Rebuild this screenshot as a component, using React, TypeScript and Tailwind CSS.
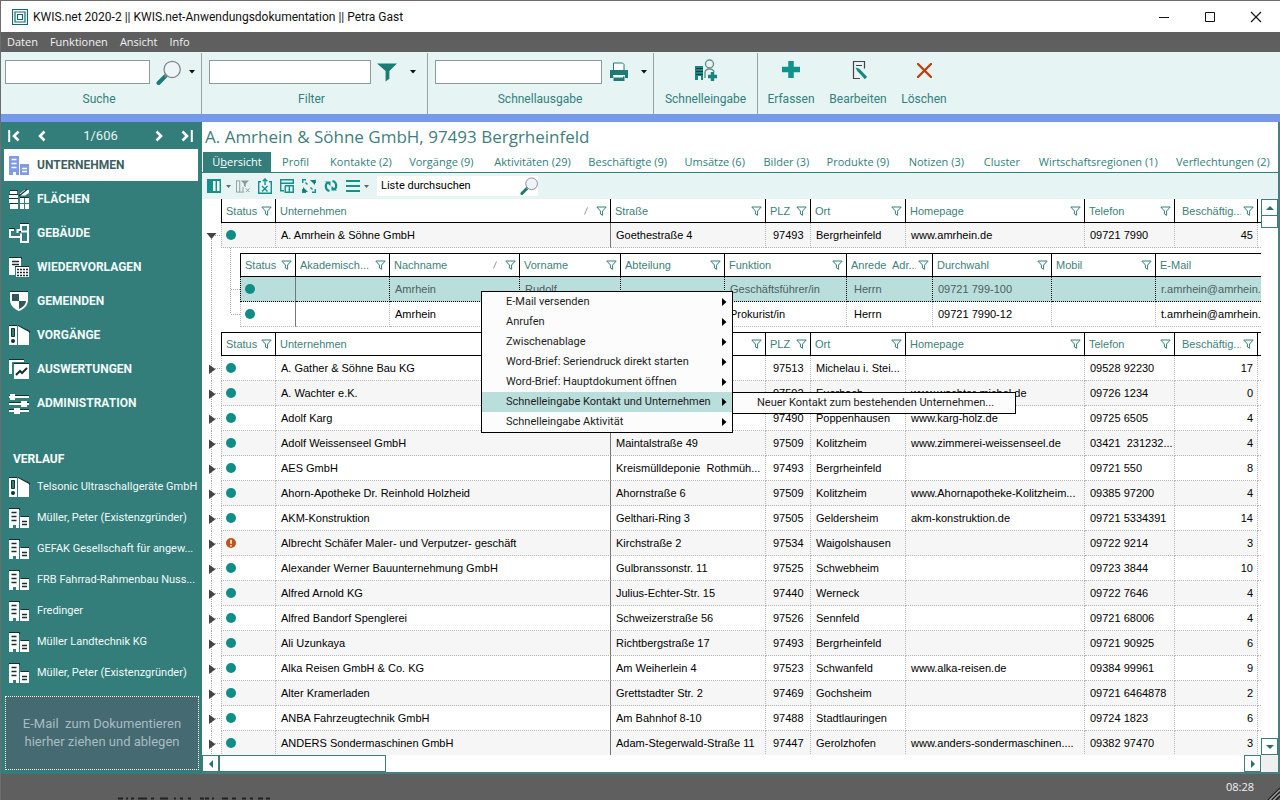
import React from "react";

type Cell = string;

const TEAL = "#1a8580";

/* ---------- drawings ---------- */

function Magnifier({ size }: { size: number }) {
  return (
    <svg width={size} height={size} viewBox="0 0 24 24" aria-hidden="true">
      <path d="M9 15.5 2.5 22" stroke="#1d7b76" strokeWidth="4" strokeLinecap="round" />
      <path d="m10.5 14-2 2" stroke="#888" strokeWidth="2" />
      <circle cx="15.5" cy="9" r="7.8" fill="#eef4f8" stroke="#7d868a" strokeWidth="1.2" />
    </svg>
  );
}

function Funnel() {
  return (
    <svg className="shrink-0" width="11" height="10" viewBox="0 0 11 10" aria-hidden="true">
      <path d="M.8 1h9.4L6.6 5v4.3L4.4 8V5L.8 1Z" fill="#fff" stroke="#33807d" />
    </svg>
  );
}

function Caret() {
  return (
    <svg width="6" height="4" viewBox="0 0 6 4" aria-hidden="true">
      <path d="M0 0h6L3 3.4Z" fill="#111" />
    </svg>
  );
}

function Building({ fill, line }: { fill: string; line: string }) {
  return (
    <svg width="21" height="21" viewBox="0 0 21 21" aria-hidden="true">
      <path d="M0 0h11v2H0zM12 8h8v2h-8z" fill={line} />
      <path d="M0 1h10v19H7v-3H4v3H0zM11 9h9v11h-9z" fill={fill} />
      <path d="M2.5 4.500h5M2.500 8.500h5M2.500 12.500h5M13 13.500h5M13 16.500h5" stroke={line} strokeWidth="1.400" />
    </svg>
  );
}

function Binder() {
  return (
    <svg width="21" height="21" viewBox="0 0 21 21" aria-hidden="true">
      <path d="M0 0h8v2H0zM9 0l12 6v2L9 2z" fill="#16302f" />
      <path d="M0 1h8v19H0zM9 1l11 6v13H9z" fill="#fff" />
      <path d="M2.5 3.5h3v8h-3z" fill="#337d7a" stroke="#16302f" />
      <circle cx="4" cy="16" r="2" fill="#16302f" />
    </svg>
  );
}

function Parcels() {
  return (
    <svg width="21" height="21" viewBox="0 0 21 21" aria-hidden="true">
      <path d="M1 1h8v1H1zM0 5h9v1H0zM0 9h9v1H0zM1 14h8v1H1zM11 8h9v1h-9z" fill="#16302f" />
      <path d="M1 2h7v3H1zM0 6h9v3H0zM0 10h9v4H0zM1 15h8v5H1zM11 9h4v5h-4zM16 9h4v5h-4zM11 15h4v5h-4zM16 15h4v5h-4z" fill="#fff" />
      <path d="M11 6.500V4.500L15.500 1H20v3l-4 2.500z" fill="#fff" />
      <path d="M10 7 18 .500" stroke="#16302f" strokeWidth="1.200" />
    </svg>
  );
}

function FloorPlan() {
  return (
    <svg width="21" height="21" viewBox="0 0 21 21" fill="none" aria-hidden="true">
      <path d="M0 5.500h6M11 .500h9M0 5.500v9M11 8.500h7" stroke="#16302f" strokeWidth="1.200" />
      <path d="M5 7H1v7h11v5h7V2h-7v5H8.500v3M12 8.500h7M12 10.500V14" stroke="#fff" strokeWidth="2" />
    </svg>
  );
}

function Reminder() {
  return (
    <svg width="21" height="21" viewBox="0 0 21 21" aria-hidden="true">
      <path d="M0 0h13v2H0zM6 9h14v1H6z" fill="#16302f" />
      <path d="M0 1h12v8H6v9H0z" fill="#fff" />
      <path d="M3 4.500h7M3 7.500h7" stroke="#16302f" strokeWidth="1.400" />
      <path d="M7 10h13v10H7z" fill="#fff" />
      <path d="M8 12.500h11M8 15.500h11M8 18.500h11" stroke="#16302f" strokeWidth="1.600" strokeDasharray="2 1" />
    </svg>
  );
}

function Shield() {
  return (
    <svg width="21" height="21" viewBox="0 0 21 21" aria-hidden="true">
      <path d="M1 0h18v2H1z" fill="#16302f" />
      <path d="M1 1h18v8c0 5-4 9-9 11-5-2-9-6-9-11z" fill="#fff" />
      <path d="M3 3h7v7H3zM10 10h7c-.5 4-3 6-7 8z" fill="#2b5a57" />
    </svg>
  );
}

function Reports() {
  return (
    <svg width="21" height="21" viewBox="0 0 21 21" aria-hidden="true">
      <path d="M0 0h15v1H0zM5 4h15v1H5z" fill="#16302f" />
      <path d="M0 1h15v2H3v12H0zM5 5h15v15H5z" fill="#fff" />
      <path d="m7 16 4-4 2 2 5-5" stroke="#16302f" strokeWidth="2" fill="none" />
    </svg>
  );
}

function Sliders() {
  return (
    <svg width="21" height="21" viewBox="0 0 21 21" aria-hidden="true">
      <path d="M0 2h20v1H0zM0 9h20v1H0zM0 16h20v1H0z" fill="#16302f" />
      <path d="M0 3h20v2H0zM0 10h20v2H0zM0 17h20v2H0zM1 1h5v6H1zM12 8h6v6h-6zM5 15h6v6H5z" fill="#fff" />
    </svg>
  );
}

function PageArrow({ last, flip }: { last?: boolean; flip?: boolean }) {
  return (
    <svg width="12" height="12" viewBox="0 0 12 12" className={flip ? "-scale-x-100" : ""} fill="none" stroke="#fff" aria-hidden="true">
      <path d="m1.500 1.500 4.500 4.500-4.500 4.500" strokeWidth="2.600" />
      {last && <path d="M10.800 0v12" strokeWidth="2" />}
    </svg>
  );
}

function TreeNode({ open }: { open?: boolean }) {
  return (
    <svg className="block" width="19" height="25" viewBox="0 0 19 25" aria-hidden="true">
      <path d={open ? "M9.500 14v11M13 12.500h6" : "M9.500 0v25M13 12.500h6"} stroke="#aaa" strokeDasharray="1 1" />
      {open ? <path d="M4.500 10h10l-5 6z" fill="#444" /> : <path d="M7 8.500v9.500l6.500-4.700z" fill="#444" />}
    </svg>
  );
}

function Dot() {
  return <span className="block size-[10px] rounded-full bg-[#0f8d86]" />;
}

function Alert() {
  return (
    <svg className="block" width="10" height="10" viewBox="0 0 10 10" aria-hidden="true">
      <circle cx="5" cy="5" r="5" fill="#c1531a" />
      <path d="M5 1.800v4M5 7v1.400" stroke="#fff" strokeWidth="1.500" />
    </svg>
  );
}

/* ---------- data ---------- */

const nav = [
  { label: "UNTERNEHMEN", icon: <Building fill="#7f9be6" line="#fff" /> },
  { label: "FLÄCHEN", icon: <Parcels /> },
  { label: "GEBÄUDE", icon: <FloorPlan /> },
  { label: "WIEDERVORLAGEN", icon: <Reminder /> },
  { label: "GEMEINDEN", icon: <Shield /> },
  { label: "VORGÄNGE", icon: <Binder /> },
  { label: "AUSWERTUNGEN", icon: <Reports /> },
  { label: "ADMINISTRATION", icon: <Sliders /> },
];

const recent = [
  "Telsonic Ultraschallgeräte GmbH",
  "Müller, Peter (Existenzgründer)",
  "GEFAK Gesellschaft für angew...",
  "FRB Fahrrad-Rahmenbau Nuss...",
  "Fredinger",
  "Müller Landtechnik KG",
  "Müller, Peter (Existenzgründer)",
];

const tabs = [
  "Profil", "Kontakte (2)", "Vorgänge (9)", "Aktivitäten (29)", "Beschäftigte (9)", "Umsätze (6)",
  "Bilder (3)", "Produkte (9)", "Notizen (3)", "Cluster", "Wirtschaftsregionen (1)", "Verflechtungen (2)",
];

const companyColumns = ["Unternehmen", "Straße", "PLZ", "Ort", "Homepage", "Telefon", "Beschäftig..."];
const contactColumns = ["Akademisch...", "Nachname", "Vorname", "Abteilung", "Funktion", "Anrede  Adr...", "Durchwahl", "Mobil", "E-Mail"];

const companies: Cell[][] = [
  ["A. Gather & Söhne Bau KG", "", "97513", "Michelau i. Stei...", "", "09528 92230", "17"],
  ["A. Wachter e.K.", "", "97502", "Euerbach", "www.wachter-michel.de", "09726 1234", "0"],
  ["Adolf Karg", "", "97490", "Poppenhausen", "www.karg-holz.de", "09725 6505", "4"],
  ["Adolf Weissenseel GmbH", "Maintalstraße 49", "97509", "Kolitzheim", "www.zimmerei-weissenseel.de", "03421  231232...", "4"],
  ["AES GmbH", "Kreismülldeponie  Rothmüh...", "97493", "Bergrheinfeld", "", "09721 550", "8"],
  ["Ahorn-Apotheke Dr. Reinhold Holzheid", "Ahornstraße 6", "97509", "Kolitzheim", "www.Ahornapotheke-Kolitzheim...", "09385 97200", "4"],
  ["AKM-Konstruktion", "Gelthari-Ring 3", "97505", "Geldersheim", "akm-konstruktion.de", "09721 5334391", "14"],
  ["Albrecht Schäfer Maler- und Verputzer- geschäft", "Kirchstraße 2", "97534", "Waigolshausen", "", "09722 9214", "3"],
  ["Alexander Werner Bauunternehmung GmbH", "Gulbranssonstr. 11", "97525", "Schwebheim", "", "09723 3844", "10"],
  ["Alfred Arnold KG", "Julius-Echter-Str. 15", "97440", "Werneck", "", "09722 7646", "4"],
  ["Alfred Bandorf Spenglerei", "Schweizerstraße 56", "97526", "Sennfeld", "", "09721 68006", "4"],
  ["Ali Uzunkaya", "Richtbergstraße 17", "97493", "Bergrheinfeld", "", "09721 90925", "6"],
  ["Alka Reisen GmbH & Co. KG", "Am Weiherlein 4", "97523", "Schwanfeld", "www.alka-reisen.de", "09384 99961", "9"],
  ["Alter Kramerladen", "Grettstadter Str. 2", "97469", "Gochsheim", "", "09721 6464878", "2"],
  ["ANBA Fahrzeugtechnik GmbH", "Am Bahnhof 8-10", "97488", "Stadtlauringen", "", "09724 1823", "6"],
  ["ANDERS Sondermaschinen GmbH", "Adam-Stegerwald-Straße 11", "97447", "Gerolzhofen", "www.anders-sondermaschinen....", "09382 97470", "3"],
];

const menuItems = [
  "E-Mail versenden", "Anrufen", "Zwischenablage", "Word-Brief: Seriendruck direkt starten",
  "Word-Brief: Hauptdokument öffnen", "Schnelleingabe Kontakt und Unternehmen", "Schnelleingabe Aktivität",
];

/* ---------- grid parts ---------- */

function HeaderLabel({ text, sorted, filter = true }: { text: string; sorted?: boolean; filter?: boolean }) {
  return (
    <div className="flex items-center gap-0.5 overflow-hidden pr-[3px] pl-1">
      <span className="flex-1 overflow-hidden text-left whitespace-pre">{text}</span>
      {sorted && (
        <svg className="mr-1.5" width="4" height="8" viewBox="0 0 4 8" aria-hidden="true">
          <path d="M.5 7.500 3.500.5" stroke="#999" />
        </svg>
      )}
      {filter && <Funnel />}
    </div>
  );
}

function CompanyHeader({ topLine }: { topLine?: boolean }) {
  const line = topLine ? "border-t" : "";
  return (
    <tr className="h-6 text-[#3f7f7c]">
      <td className="p-0">
        {topLine && (
          <svg className="block" width="19" height="24" aria-hidden="true">
            <path d="M9.500 0v24" stroke="#aaa" strokeDasharray="1 1" />
          </svg>
        )}
      </td>
      <th scope="col" className={`border-x border-b border-black p-0 font-normal ${line}`}>
        <HeaderLabel text="Status" />
      </th>
      {companyColumns.map((c) => (
        <th key={c} scope="col" className={`border-r border-b border-black p-0 font-normal ${line} ${c.startsWith("Besch") ? "pl-[3px]" : ""}`}>
          <HeaderLabel text={c} sorted={c === "Unternehmen"} />
        </th>
      ))}
      <td className={`border-b border-black p-0 ${line}`} />
    </tr>
  );
}

function CompanyRow({ cells, shaded, open }: { cells: Cell[]; shaded?: boolean; open?: boolean }) {
  const dotted = "border-b border-dotted border-[#b5b5b5]";
  return (
    <tr className="h-[25px]">
      <td className="p-0"><TreeNode open={open} /></td>
      <td className={`border-x pl-1 py-0 ${dotted} ${shaded ? "bg-[#f6f6f6]" : ""}`}>
        {cells[0].startsWith("Albrecht") ? <Alert /> : <Dot />}
      </td>
      {cells.map((c, i) => (
        <td
          key={i}
          className={`overflow-hidden border-r py-0 whitespace-pre ${dotted} ${shaded ? "bg-[#f6f6f6]" : ""} ${
            i === 0 ? "[border-right-color:#777] [border-right-style:solid]" : ""
          } ${i === 6 ? "pr-1 text-right" : i === 2 ? "pl-[7px]" : "pl-[5px]"}`}
        >
          {c}
        </td>
      ))}
      <td className={`p-0 ${dotted}`} />
    </tr>
  );
}

function ContactRow({ cells, selected }: { cells: Cell[]; selected?: boolean }) {
  const tone = selected
    ? "border-b border-dotted border-black bg-[#b9dedb] text-[#4d5f5e]"
    : "border-b border-dotted border-[#b5b5b5]";
  return (
    <tr className="h-[25px]">
      <td className={`border-l border-r py-0 pl-1 ${tone} [border-right-color:#777] [border-right-style:solid]`}><Dot /></td>
      {cells.map((c, i) => (
        <td key={i} className={`overflow-hidden py-0 whitespace-pre ${i === 5 ? "pl-[7px]" : "pl-[5px]"} ${i < 8 ? "border-r" : ""} ${tone}`}>
          {c}
        </td>
      ))}
    </tr>
  );
}

function ContactTable() {
  return (
    <table className="w-full table-fixed border-separate border-spacing-0">
      <colgroup>
        <col className="w-[56px]" /><col className="w-[94px]" /><col className="w-[130px]" /><col className="w-[101px]" />
        <col className="w-[104px]" /><col className="w-[122px]" /><col className="w-[86px]" /><col className="w-[119px]" />
        <col className="w-[104px]" /><col />
      </colgroup>
      <thead>
        <tr className="h-6 text-[#3f7f7c]">
          <th scope="col" className="border border-black p-0 font-normal"><HeaderLabel text="Status" /></th>
          {contactColumns.map((c, i) => (
            <th key={c} scope="col" className={`border-y border-black p-0 font-normal ${i < 8 ? "border-r" : ""}`}>
              <HeaderLabel text={c} sorted={i === 1} filter={i < 8} />
            </th>
          ))}
        </tr>
      </thead>
      <tbody>
        <ContactRow selected cells={["", "Amrhein", "Rudolf", "", "Geschäftsführer/in", "Herrn", "09721 799-100", "", "r.amrhein@amrhein."]} />
        <ContactRow cells={["", "Amrhein", "", "", "Prokurist/in", "Herrn", "09721 7990-12", "", "t.amrhein@amrhein."]} />
      </tbody>
    </table>
  );
}

function ContextMenu() {
  return (
    <ul role="menu" className="absolute top-[92px] left-[279px] w-[252px] border border-black bg-[#fcfcfc] font-[Roboto,'Noto_Sans',sans-serif] text-[11px] leading-5 text-[#1d1d1d]">
      {menuItems.map((m, i) => (
        <li key={m} role="none" className="relative">
          <button role="menuitem" className={`flex h-5 w-full items-center justify-between pr-[5px] pl-6 ${i === 5 ? "bg-[#b9dedb]" : ""}`}>
            <span className="whitespace-nowrap">{m}</span>
            <svg width="5" height="8" viewBox="0 0 5 8" aria-hidden="true"><path d="M0 0v8l4.500-4z" fill="#000" /></svg>
          </button>
          {i === 5 && (
            <div role="menu" className="absolute top-0 left-[250px] w-[284px] border border-black bg-[#fcfcfc]">
              <button role="menuitem" className="block h-5 w-full pl-6 text-left whitespace-nowrap">Neuer Kontakt zum bestehenden Unternehmen...</button>
            </div>
          )}
        </li>
      ))}
    </ul>
  );
}

function ScrollButton({ dir }: { dir: "up" | "down" | "left" | "right" }) {
  const d = { up: "M0 6h8L4 2z", down: "M0 2h8L4 6z", left: "M6 0v8L2 4z", right: "M2 0v8l4-4z" }[dir];
  return (
    <button aria-label={`Scroll ${dir}`} className="flex size-[17px] shrink-0 items-center justify-center border border-[#3b7d7a] bg-white">
      <svg width="8" height="8" viewBox="0 0 8 8" aria-hidden="true"><path d={d} fill="#2f6f6c" /></svg>
    </button>
  );
}

/* ---------- ribbon ---------- */

function RibbonSearch({ id, label, width, icon }: { id: string; label: string; width: string; icon: React.ReactNode }) {
  return (
    <div className={`flex flex-col justify-between border-r border-[#93a5a5] pt-[7px] pb-[7px] ${width}`}>
      <div className="flex items-center gap-1.5 pr-[6px] pl-1">
        <input id={id} className="h-6 min-w-0 flex-1 border border-[#8c9a9a] bg-white px-1 text-xs" />
        <button aria-label={label} className="flex h-6 w-[27px] items-center justify-start">{icon}</button>
        <button aria-label={`${label} Optionen`} className="flex h-6 items-center"><Caret /></button>
      </div>
      <label htmlFor={id} className="pr-1 text-center">{label}</label>
    </div>
  );
}

function RibbonButton({ label, width, icon }: { label: string; width: string; icon: React.ReactNode }) {
  return (
    <button className={`flex flex-col items-center justify-between pt-[5px] pb-[7px] ${width}`}>
      <span className="flex h-6 items-center">{icon}</span>
      <span>{label}</span>
    </button>
  );
}

function Ribbon() {
  return (
    <div className="flex h-[62px] shrink-0 bg-[#e6f4f3] pt-px font-[Roboto,'Noto_Sans',sans-serif] text-[12px] leading-[16px] text-[#33807d]">
      <RibbonSearch id="suche" label="Suche" width="w-[201px]" icon={<Magnifier size={25} />} />
      <RibbonSearch
        id="filter" label="Filter" width="w-[226px] pl-[3px] pr-[5px]"
        icon={<svg width="20" height="21" viewBox="0 0 21 21"><path d="M0 1h21l-8 8v8l-4 3V9z" fill="#1d7b76" /></svg>}
      />
      <RibbonSearch
        id="ausgabe" label="Schnellausgabe" width="w-[226px] pl-[3px]"
        icon={
          <svg className="ml-0.5" width="18" height="20" viewBox="0 0 18 20">
            <path d="M3.500 8V1h9l1.500 1.500V8" fill="#fff" stroke="#1d7b76" />
            <path d="M0 8h18v8h-3v-3H3v3H0z" fill="#1d7b76" />
            <path d="M3.500 14.500h11v4.500h-11z" fill="#1d7b76" /><path d="M4 14h9v1.500H4z" fill="#fff" />
          </svg>
        }
      />
      <div className="flex border-r border-[#93a5a5]">
        <RibbonButton
          label="Schnelleingabe" width="w-[103px]"
          icon={
            <svg width="22" height="22" viewBox="0 0 22 22" fill="none">
              <path d="M0 7h8v14H6v-4H3v4H0z" fill={TEAL} />
              <path d="M1 9.500h7M1 12.500h7M1 15.500h7" stroke="#12413f" />
              <circle cx="14.500" cy="5" r="4" stroke="#6b8f8d" strokeWidth="1.400" />
              <path d="M10 19v-5c0-2.500 2-4 4.500-4s4 1 4.500 3" stroke="#6b8f8d" strokeWidth="1.400" />
              <path d="M17.500 13v9M13 17.500h9" stroke={TEAL} strokeWidth="3.400" />
            </svg>
          }
        />
      </div>
      <RibbonButton label="Erfassen" width="w-[66px]" icon={<svg width="18" height="18" viewBox="0 0 18 18"><path d="M9 0v17M0 8.500h18" stroke="#11928b" strokeWidth="5.500" /></svg>} />
      <RibbonButton
        label="Bearbeiten" width="w-[68px]"
        icon={
          <svg className="ml-1" width="16" height="20" viewBox="0 0 16 20" fill="none">
            <path d="M8 18.500H1.500v-17h11v7M12.500 17v1.500" stroke="#444" strokeWidth="1.200" />
            <path d="M4 5.500h6" stroke="#444" />
            <path d="m6.500 10 7.500 8" stroke={TEAL} strokeWidth="3.200" />
            <path d="M3.500 7.500 8 9l-2.500 2.500z" fill={TEAL} />
          </svg>
        }
      />
      <RibbonButton label="Löschen" width="w-[64px]" icon={<svg width="15" height="15" viewBox="0 0 15 15"><path d="m1 1 13 13M14 1 1 14" stroke="#b8430f" strokeWidth="2.400" strokeLinecap="round" /></svg>} />
    </div>
  );
}

/* ---------- list toolbar ---------- */

function ListToolbar() {
  const btn = "flex h-5 w-[14px] items-center justify-center";
  return (
    <div className="flex h-[26px] shrink-0 items-center gap-2 bg-[#e6f4f3] pl-[5px]">
      <div className="flex items-center gap-2">
        <button aria-label="Spalten" className={btn}>
          <svg width="14" height="14" viewBox="0 0 14 14"><path d="M0 0h14v14H0z" fill="#11928b" /><path d="M6 2h2.500v10H6zM10 2h2.500v10H10z" fill="#fff" /></svg>
        </button>
        <button aria-label="Spalten Optionen" className="-mx-[3px]"><svg width="5" height="3" viewBox="0 0 5 3"><path d="M0 0h5L2.500 3z" fill="#666" /></svg></button>
        <button aria-label="Filter entfernen" className={btn}>
          <svg width="15" height="15" viewBox="0 0 15 15" fill="none" stroke="#8d9a9a">
            <path d="M.5 1v12.500h8M.5 1.500h3.500v12M7.500 8v5.500" /><path d="M5 1h9l-3.500 3.500V8L8.500 7V4.500z" fill="#8d9a9a" stroke="none" /><path d="m10.500 9.500 4 4M14.500 9.500l-4 4" />
          </svg>
        </button>
      </div>
      <button aria-label="Excel-Export" className={btn}>
        <svg width="14" height="16" viewBox="0 0 14 16" fill="none" stroke="#11928b" strokeWidth="1.400">
          <path d="M3 3.700H.7v11.600h12.600V3.700H11M7 7V1.500M4.700 3.300 7 1l2.300 2.300M4 8l5.500 5.500M9.500 8 4 13.500" />
        </svg>
      </button>
      <button aria-label="Tabelle" className={btn}>
        <svg width="14" height="14" viewBox="0 0 14 14" fill="none" stroke="#11928b" strokeWidth="1.400">
          <path d="M.7.7h12.600v3.600H.7zM.7 4.300v7.500H4" /><path d="M5 6.700h8.300v6.600H5.200V6.700M9.300 7v6" />
        </svg>
      </button>
      <button aria-label="Maximieren" className={btn}>
        <svg width="14" height="14" viewBox="0 0 14 14" fill="none" stroke="#11928b" strokeWidth="1.400">
          <path d="M.7 4V.7H4M13.300 10v3.300H10M13.300 4V.7M.7 10v3.300H4M5.500 5.500l-2-2M8.500 8.500l2 2" />
          <path d="M8 1h5v5zM1 8l5 5H1z" fill="#1d7b76" stroke="none" />
        </svg>
      </button>
      <button aria-label="Aktualisieren" className={btn}>
        <svg width="14" height="14" viewBox="0 0 14 14" fill="none" stroke="#11928b" strokeWidth="2.200"><path d="M5.500 12C1 11 1 5.500 3.500 3.500M8.500 2c4.500 1 4.500 6.500 2 8.500" /><path d="M1 2.500h5.500V7zM13 11.500H7.500V7z" fill="#11928b" stroke="none" /></svg>
      </button>
      <button aria-label="Menü" className={btn}>
        <svg width="14" height="12" viewBox="0 0 14 12"><path d="M0 1h14M0 6h14M0 11h14" stroke="#11928b" strokeWidth="2" /></svg>
      </button>
      <button aria-label="Menü Optionen" className="-ml-1"><svg width="5" height="3" viewBox="0 0 5 3"><path d="M0 0h5L2.500 3z" fill="#666" /></svg></button>
      <div className="flex h-5 w-[161px] items-center bg-white pl-1">
        <input aria-label="Liste durchsuchen" placeholder="Liste durchsuchen" className="min-w-0 flex-1 bg-transparent font-[Roboto,'Noto_Sans',sans-serif] text-[11px] text-black outline-none placeholder:text-black" />
        <Magnifier size={18} />
      </div>
    </div>
  );
}

/* ---------- page ---------- */

export default function App() {
  return (
    <div className="flex h-screen flex-col overflow-hidden border-t border-l border-[#6d6d6d] bg-white font-['Open_Sans','Noto_Sans',sans-serif]">
      <header className="flex h-[31px] shrink-0 items-center pl-[11px] font-[Roboto,'Noto_Sans',sans-serif] text-[12px] text-[#111]">
        <svg width="16" height="16" viewBox="0 0 16 16" fill="none" stroke="#14696c" aria-hidden="true">
          <path d="M.5.5h15v15H.5zM3 3h10v10H3zM5.500 5.500h5v5h-5z" strokeWidth="1.200" />
        </svg>
        <h1 className="ml-[5px] flex-1 whitespace-nowrap">KWIS.net 2020-2 || KWIS.net-Anwendungsdokumentation || Petra Gast</h1>
        <div className="flex gap-[34px] pr-[18px]">
          <button aria-label="Minimieren"><svg width="12" height="12" viewBox="0 0 12 12"><path d="M1 6.500h10" stroke="#111" /></svg></button>
          <button aria-label="Maximieren"><svg width="12" height="12" viewBox="0 0 12 12"><path d="M1.500 1.500h9v9h-9z" fill="none" stroke="#111" /></svg></button>
          <button aria-label="Schließen"><svg width="12" height="12" viewBox="0 0 12 12"><path d="m1 1 10 10M11 1 1 11" stroke="#111" strokeWidth="1.100" /></svg></button>
        </div>
      </header>

      <nav className="flex h-5 shrink-0 items-center gap-3 bg-[#5f5f5f] pl-1.5 text-[11px] text-[#f2f2f2]">
        <button>Daten</button><button>Funktionen</button><button>Ansicht</button><button>Info</button>
      </nav>

      <Ribbon />
      <div className="h-2 shrink-0 bg-[#7799ea]" />

      <div className="flex min-h-0 flex-1">
        <aside className="flex w-[201px] shrink-0 flex-col bg-[#337d7a] font-[Roboto,'Noto_Sans',sans-serif] text-white">
          <div className="flex h-[27px] shrink-0 items-center justify-between pr-[9px] pl-[7px]">
            <div className="flex gap-[14px]">
              <button aria-label="Erster"><PageArrow last flip /></button>
              <button aria-label="Zurück"><PageArrow flip /></button>
            </div>
            <span className="text-[13px] text-[#e8f3f2]">1/606</span>
            <div className="flex gap-[14px]">
              <button aria-label="Weiter"><PageArrow /></button>
              <button aria-label="Letzter"><PageArrow last /></button>
            </div>
          </div>
          <nav className="flex flex-col gap-0.5 pr-1 pl-[3px]">
            {nav.map((n, i) => (
              <button key={n.label} className={`flex h-8 items-center gap-[7px] pl-[5px] text-[12px] font-bold ${i === 0 ? "bg-white text-[#3d5f60]" : "text-[#f1faf9]"}`}>
                {n.icon}
                <span>{n.label}</span>
              </button>
            ))}
          </nav>
          <h2 className="mt-[30px] pl-3 text-[12px] leading-[20px] font-bold">VERLAUF</h2>
          <ul className="mt-[3px] flex flex-col pl-2 text-[11px] text-[#f1faf9]">
            {recent.map((r, i) => (
              <li key={i}>
                <button className="flex h-[31px] items-center gap-[7px] whitespace-nowrap">
                  {i === 0 ? <Binder /> : <Building fill="#fff" line="#16302f" />}
                  {r}
                </button>
              </li>
            ))}
          </ul>
          <div className="mt-auto mr-[3px] mb-1 ml-1 flex h-[74px] shrink-0 flex-col items-center justify-center border border-dotted border-white bg-[#456a72] text-[13px] leading-[18px] text-[#a9bcc0]">
            <p className="whitespace-pre">E-Mail  zum Dokumentieren</p>
            <p>hierher ziehen und ablegen</p>
          </div>
        </aside>

        <main className="flex min-w-0 flex-1 flex-col border-r-2 border-b-2 border-[#46807e]">
          <h2 className="flex h-[30px] shrink-0 items-center pl-[3px] text-[17px] text-[#3f7f7c]">A. Amrhein &amp; Söhne GmbH, 97493 Bergrheinfeld</h2>
          <div role="tablist" className="grid h-[21px] shrink-0 grid-cols-[68fr_48fr_79fr_85fr_94fr_96fr_79fr_63fr_82fr_75fr_55fr_137fr_113fr] border-b border-[#33807d] pl-px text-[11px] text-[#33807d]">
            <button role="tab" aria-selected="true" className="bg-[#337d7a] text-white">Ü<u>b</u>ersicht</button>
            {tabs.map((t) => (
              <button key={t} role="tab" className="pl-[11px] text-left whitespace-nowrap">{t}</button>
            ))}
          </div>
          <ListToolbar />

          <div className="flex min-h-0 flex-1 font-['Liberation_Sans',Arial,sans-serif] text-[11px] leading-[14px] text-black">
            <div className="relative min-w-0 flex-1 overflow-hidden">
              <table className="w-full table-fixed border-separate border-spacing-0">
                <colgroup>
                  <col className="w-[19px]" /><col className="w-[55px]" /><col className="w-[335px]" /><col className="w-[155px]" />
                  <col className="w-[45px]" /><col className="w-[95px]" /><col className="w-[179px]" /><col className="w-[90px]" />
                  <col className="w-[83px]" /><col />
                </colgroup>
                <thead><CompanyHeader /></thead>
                <tbody>
                  <CompanyRow open shaded cells={["A. Amrhein & Söhne GmbH", "Goethestraße 4", "97493", "Bergrheinfeld", "www.amrhein.de", "09721 7990", "45"]} />
                  <tr>
                    <td colSpan={10} className="p-0">
                      <div className="flex h-[84px] items-center">
                        <svg className="shrink-0" width="38" height="84" viewBox="0 0 38 84" aria-hidden="true">
                          <path d="M9.500 0v84M28.500 0v66M29 41.500h9M29 66.500h9" stroke="#aaa" strokeDasharray="1 1" fill="none" />
                        </svg>
                        <div className="min-w-0 flex-1"><ContactTable /></div>
                      </div>
                    </td>
                  </tr>
                  <CompanyHeader topLine />
                  {companies.map((c, i) => <CompanyRow key={c[0]} cells={c} shaded={i % 2 === 1} />)}
                </tbody>
              </table>
              <ContextMenu />
            </div>
            <div className="flex w-[17px] shrink-0 flex-col">
              <ScrollButton dir="up" />
              <div className="h-3 border border-t-0 border-[#3b7d7a]" />
              <div className="flex-1" />
              <ScrollButton dir="down" />
            </div>
          </div>
          <div className="flex h-[17px] shrink-0">
            <ScrollButton dir="left" />
            <div className="w-[167px] border border-[#3b7d7a]" />
            <div className="flex-1" />
            <ScrollButton dir="right" />
            <div className="w-[17px] bg-[#efefef]" />
          </div>
        </main>
      </div>

      <footer className="flex h-[26px] shrink-0 items-center justify-between bg-[#5f5f5f] text-[11px] text-[#f2f2f2]">
        <svg className="ml-[117px] self-end" width="160" height="4" viewBox="0 0 160 4" aria-hidden="true">
          <path d="M0 2.500h5M8 2.500h2M13 2.500h3M20 2.500h9M33 2.500h3M42 2.500h8M56 2.500h2M62 2.500h3M70 2.500h3M82 2.500h4M87 2.500h4M94 2.500h2M104 2.500h6M114 2.500h4M124 2.500h4M132 2.500h3M140 2.500h5M148 2.500h4" stroke="#222" strokeWidth="2" />
        </svg>
        <div className="flex h-full items-end gap-3">
          <time className="self-center">08:28</time>
          <svg width="14" height="14" viewBox="0 0 14 14" aria-hidden="true"><path d="M2 14 14 2M6 14l8-8M10 14l4-4" stroke="#222" strokeWidth="1.500" /><path d="M3.500 14 14 3.500M7.500 14 14 7.500" stroke="#ccc" /></svg>
        </div>
      </footer>
    </div>
  );
}
